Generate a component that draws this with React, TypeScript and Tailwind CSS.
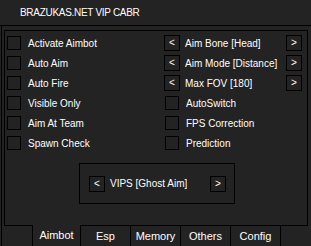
import { FC } from "react";

const Check: FC<{ label: string }> = ({ label }) => (
  <div className="h-[20px] flex items-center gap-[7px]">
    <div className="w-[14px] h-[14px] border border-black" />
    <span>{label}</span>
  </div>
);

const ArrowBtn: FC<{ dir: string }> = ({ dir }) => (
  <div className="w-[16px] h-[16px] border border-black flex items-center justify-center leading-none">
    {dir}
  </div>
);

const Selector: FC<{ label: string }> = ({ label }) => (
  <div className="h-[20px] flex items-center pr-[5px]">
    <ArrowBtn dir="<" />
    <span className="ml-[5px] flex-1">{label}</span>
    <ArrowBtn dir=">" />
  </div>
);

const leftItems = [
  "Activate Aimbot",
  "Auto Aim",
  "Auto Fire",
  "Visible Only",
  "Aim At Team",
  "Spawn Check",
];

const tabs = ["Esp", "Memory", "Others", "Config"];

export default function App() {
  return (
    <div className="w-[311px] h-[246px] bg-[#232323] text-white font-['Liberation_Sans',sans-serif] text-[10px] flex flex-col overflow-hidden">
      <div className="h-[26px] shrink-0 border-b border-black pl-[20px] flex items-center tracking-[-0.3px]">
        BRAZUKAS.NET VIP CABR
      </div>
      <div className="flex-1 flex flex-col ml-px border-l border-black pt-[4px]">
        <div className="ml-[2px] w-[304px] h-[195px] border-t border-l border-r border-black pt-[2px]">
          <div className="grid grid-cols-[159px_1fr]">
            <div className="pl-[2px]">
              {leftItems.map((l) => (
                <Check key={l} label={l} />
              ))}
            </div>
            <div>
              <Selector label="Aim Bone [Head]" />
              <Selector label="Aim Mode [Distance]" />
              <Selector label="Max FOV [180]" />
              <div className="pl-px">
                <Check label="AutoSwitch" />
                <Check label="FPS Correction" />
                <Check label="Prediction" />
              </div>
            </div>
          </div>
          <div className="mt-[10px] ml-[74px] w-[156px] h-[41px] border border-black flex items-center pl-[9px]">
            <ArrowBtn dir="<" />
            <span className="ml-[5px] w-[100px]">VIPS [Ghost Aim]</span>
            <ArrowBtn dir=">" />
          </div>
        </div>
        <div className="ml-[2px] w-[304px] flex-1 flex text-[11px]">
          <div className="w-[28px] border-t border-black" />
          <div className="w-[49px] border-l border-r border-black flex items-center justify-center">
            Aimbot
          </div>
          {tabs.map((t) => (
            <div
              key={t}
              className="w-[50px] border-t border-r border-black flex items-center justify-center"
            >
              {t}
            </div>
          ))}
          <div className="w-[27px] border-t border-black" />
        </div>
      </div>
    </div>
  );
}
